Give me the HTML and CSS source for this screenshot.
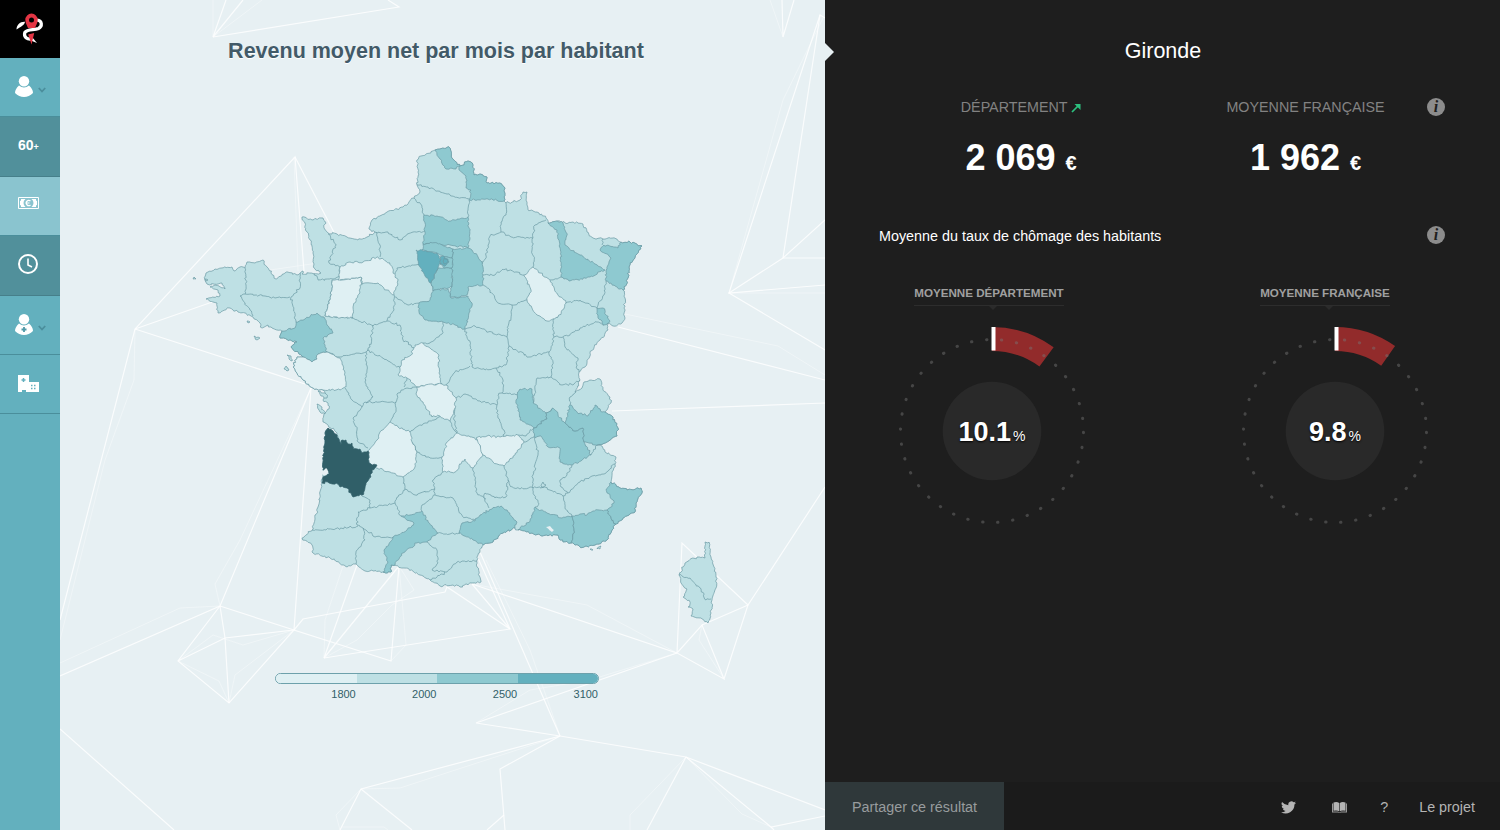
FILE: index.html
```html
<!DOCTYPE html>
<html lang="fr">
<head>
<meta charset="utf-8">
<title>Revenu moyen net par mois par habitant</title>
<link rel="stylesheet" href="styles.css">
</head>
<body>
<div class="app">
  <nav class="side">
    <a class="side-logo"><svg width="30" height="34" viewBox="0 0 30 34"><path d="M1.500 17.500C1.500 13 5 9.500 10 9.800C9.500 13.500 6 14.500 1.500 17.500Z" fill="#fff"/><path d="M22 8C27.500 8.500 27.500 14.500 23.500 16.500C19 18.500 12.500 16.500 9.800 20.500C8.500 25 12 28 17 27" fill="none" stroke="#fff" stroke-width="3.200"/><path d="M17 25l5 6-5-2z" fill="#fff"/><path d="M16.500 1.500a6.300 6.300 0 0 1 6.200 6.300C22.700 11 21 13.500 20 16h-7C12 13.500 10.300 11 10.300 7.800A6.300 6.300 0 0 1 16.500 1.500Z" fill="#e33544"/><circle cx="16.500" cy="8" r="2.500" fill="#000"/><path d="M13.200 22.500l6-1.500-2.700 11.500z" fill="#e33544"/></svg></a>
    <a class="side-item user"><svg width="18" height="21" viewBox="0 0 18 21"><circle cx="9" cy="5.200" r="5.200" fill="#fff"/><path d="M4 9.500Q9 13.500 14 9.500Q18 13 18 17Q14 21 9 21T0 17Q0 13 4 9.500Z" fill="#fff"/></svg><svg class="chev" width="8" height="6" viewBox="0 0 8 6"><path d="M.8 1L4 4.500 7.200 1" fill="none" stroke="#4b8e9c" stroke-width="1.800"/></svg></a>
    <a class="side-item dark age"><span>60</span><small>+</small></a>
    <a class="side-item active"><svg class="money" width="21" height="12" viewBox="0 0 21 12"><path d="M.5.5h20v11H.5z" fill="none" stroke="#fff"/><path d="M3 2h4.500a5 5 0 0 0 0 8H3V8.500A2 2 0 0 0 2 8V4a2 2 0 0 0 1-.5zM13.500 2H18v1.500a2 2 0 0 0 1 .5v4a2 2 0 0 0-1 .5V10h-4.500a5 5 0 0 0 0-8z" fill="#fff"/><path d="M12.500 4a2.600 2.600 0 1 0 0 4M8 6h3.500" fill="none" stroke="#fff" stroke-width="1.200"/></svg></a>
    <a class="side-item dark tall"><svg width="20" height="20" viewBox="0 0 20 20"><circle cx="10" cy="10" r="9" fill="none" stroke="#fff" stroke-width="2"/><path d="M10 4.500V11l4 2" fill="none" stroke="#fff" stroke-width="1.600"/></svg></a>
    <a class="side-item user"><svg width="18" height="21" viewBox="0 0 18 21"><circle cx="9" cy="5.200" r="5.200" fill="#fff"/><path d="M4 9.500Q9 13.500 14 9.500Q18 13 18 17Q14 21 9 21T0 17Q0 13 4 9.500Z" fill="#fff"/><path d="M9 13v5M6.500 15.500h5" stroke="#509aa8" stroke-width="1.800"/></svg><svg class="chev" width="8" height="6" viewBox="0 0 8 6"><path d="M.8 1L4 4.500 7.200 1" fill="none" stroke="#4b8e9c" stroke-width="1.800"/></svg></a>
    <a class="side-item"><svg width="21" height="18" viewBox="0 0 21 18"><path d="M0 0h11v7h10v10H8v-2H4v2H0z" fill="#fff"/><path d="M5.500 3v4M3.500 5h4" stroke="#63b0be" stroke-width="1.500"/><path d="M13 10.500h1.500M16 10.500h1.500M13 13.500h1.500M16 13.500h1.500" stroke="#63b0be" stroke-width="1.500"/></svg></a>
  </nav>

  <main class="stage">
    <svg class="map" id="map" viewBox="60 0 765 830" width="765" height="830">
      <g class="mesh" id="mesh"></g>
      <g class="mesh faint" id="mesh-faint"></g>
      <g id="land"></g>
    </svg>
    <h1 class="map-title">Revenu moyen net par mois par habitant</h1>
    <div class="legend">
      <div class="legend-bar"><i class="t1"></i><i class="t2"></i><i class="t3"></i><i class="t4"></i></div>
      <div class="legend-labels"><span>1800</span><span>2000</span><span>2500</span><span>3100</span></div>
    </div>
  </main>

  <aside class="panel">
    <i class="notch"></i>
    <h2 class="place">Gironde</h2>
    <section class="figures">
      <div class="figure"><div class="label">DÉPARTEMENT <svg width="10" height="10" viewBox="0 0 10 10"><path d="M1 9L7.500 2.500" fill="none" stroke="#2cc07f" stroke-width="1.700"/><path d="M3.500 1H9.500V7z" fill="#2cc07f"/></svg></div><div class="value">2 069 <small>€</small></div></div>
      <div class="figure"><div class="label">MOYENNE FRANÇAISE</div><div class="value">1 962 <small>€</small></div></div>
      <span class="info">i</span>
    </section>
    <section class="question"><p>Moyenne du taux de chômage des habitants</p><span class="info">i</span></section>
    <section class="gauges">
      <div class="gauge first">
        <h3>MOYENNE DÉPARTEMENT</h3>
        <div class="dial"><svg width="210" height="210" viewBox="-105 -105 210 210"><circle r="49.300" fill="#292929"/><path d="M0 -92A92 92 0 0 1 54.530 -74.100" fill="none" stroke="#922b2b" stroke-width="24"/><circle class="dots" r="91.500" transform="rotate(.8)"/><path d="M1.500 -104v23.500" stroke="#fff" stroke-width="4"/></svg><div class="rate">10.1<small>%</small></div></div>
      </div>
      <div class="gauge second">
        <h3>MOYENNE FRANÇAISE</h3>
        <div class="dial"><svg width="210" height="210" viewBox="-105 -105 210 210"><circle r="49.300" fill="#292929"/><path d="M0 -92A92 92 0 0 1 53.130 -75.110" fill="none" stroke="#922b2b" stroke-width="24"/><circle class="dots" r="91.500" transform="rotate(.8)"/><path d="M1.500 -104v23.500" stroke="#fff" stroke-width="4"/></svg><div class="rate">9.8<small>%</small></div></div>
      </div>
    </section>
    <footer class="foot">
      <a class="share">Partager ce résultat</a>
      <div class="links">
        <svg class="bird" width="15" height="13" viewBox="0 0 24 20"><path d="M24 2.400a10 10 0 0 1-2.800.8A5 5 0 0 0 23.300.5a10 10 0 0 1-3.100 1.200 4.900 4.900 0 0 0-8.400 4.500A14 14 0 0 1 1.700 1a4.900 4.900 0 0 0 1.500 6.600A5 5 0 0 1 1 7a4.900 4.900 0 0 0 3.900 4.900 5 5 0 0 1-2.200.1 4.900 4.900 0 0 0 4.600 3.400A10 10 0 0 1 0 17.400 14 14 0 0 0 21.500 5 10 10 0 0 0 24 2.400z" fill="#b4b4b4"/></svg>
        <svg class="book" width="15" height="11" viewBox="0 0 15 11"><path d="M0 1.500h1V9.500h5l1.500 1 1.500-1h5v-8h1V10.500H9l-1.500.5L6 10.500H0z" fill="#999"/><path d="M1.500.5Q5-.5 7.200 1V9.300Q5 8 1.500 8.800zM13.500.5Q10-.5 7.800 1V9.300Q10 8 13.500 8.800z" fill="#b4b4b4"/></svg>
        <a class="help">?</a><a>Le projet</a>
      </div>
    </footer>
  </aside>
</div>
<script src="map.js"></script>
</body>
</html>
```
FILE: styles.css
```css
* { box-sizing: border-box; }
body { margin: 0; font-family: "Liberation Sans", Arial, sans-serif; background: #1e1e1e; }
h1, h2, h3, p { margin: 0; }
.app { display: grid; grid-template-columns: 60px 765px 675px; height: 830px; overflow: hidden; }

/* Sidebar */
.side { background: #63b0be; display: flex; flex-direction: column; }
.side-logo { height: 58px; background: #000; display: flex; justify-content: center; align-items: center; }
.side-item { height: 59px; border-bottom: 1px solid #4a8e9b; display: flex; align-items: center; padding-left: 18px; color: #fff; }
.side-item.user { padding: 0 0 2px 15px; gap: 5px; }
.chev { margin-top: 7px; }
.side-item.dark { background: #51909b; border-color: #467f8a; height: 60px; }
.side-item.active { background: #8ac4cf; }
.side-item.active .money { margin-top: -7px; }
.side-item.tall { padding-bottom: 4px; }
.age { font-size: 14px; font-weight: bold; padding-bottom: 4px; }
.age small { font-size: 9px; margin-top: 5px; }

/* Map area */
.stage { position: relative; background: #e7f0f3; display: flex; flex-direction: column; align-items: center; }
.map { position: absolute; inset: 0; }
.map-title { position: relative; margin-top: 38px; padding-right: 13px; font-size: 21.500px; line-height: 26px; color: #425a68; text-shadow: 0 1px 0 #fff; }
.mesh path { fill: none; stroke: #fff; stroke-width: 1.2; opacity: .8; }
.mesh.faint path { stroke-width: .8; opacity: .45; }
.dep { stroke: #6a9aa4; stroke-width: .7; stroke-linejoin: round; }
.line { fill: none; }
.d1 { fill: #dff0f3; }
.d2 { fill: #bee0e4; }
.d3 { fill: #8ec9d0; }
.d4 { fill: #63b0be; }
.selected { fill: #305f68; stroke: #305f68; }
.water { fill: #e7f0f3; stroke: none; }
.legend { position: relative; margin: 609px 11px 0 0; width: 324px; }
.legend-bar { height: 11px; border: 1px solid #6da1ab; border-radius: 6px; overflow: hidden; display: flex; }
.legend-bar i { flex: 1; }
.t1 { background: #dff0f3; }
.t2 { background: #bee0e4; }
.t3 { background: #8ec9d0; }
.t4 { background: #63b0be; }
.legend-labels { display: grid; grid-template-columns: repeat(4, 1fr); margin: 4px 1px 0 0; font-size: 11px; line-height: 13px; color: #315f68; text-align: right; }

/* Results panel */
.panel { position: relative; background: #1e1e1e; color: #fff; display: flex; flex-direction: column; }
.notch { position: absolute; left: 0; top: 43px; border: 9px solid transparent; border-left-color: #e7f0f3; border-right: 0; }
.place { margin-top: 38px; padding-left: 1px; font-size: 21.500px; line-height: 26px; font-weight: normal; text-align: center; }
.figures { display: grid; grid-template-columns: 284px 285px 1fr; padding-left: 54px; height: 134px; margin-top: 34px; }
.figures .info { margin-left: -21px; }
.figure { display: flex; flex-direction: column; align-items: center; }
.label { font-size: 14.300px; line-height: 18px; color: #828282; white-space: nowrap; }
.label svg { vertical-align: -1px; }
.value { font-size: 36px; line-height: 42px; font-weight: bold; margin-top: 21px; white-space: nowrap; }
.value small { font-size: 20px; }
.info { width: 18px; height: 18px; border-radius: 50%; background: #8c8c8c; color: #1e1e1e; font: italic bold 16px/18px "Liberation Serif", serif; text-align: center; }
.question { display: flex; justify-content: space-between; padding: 0 55px 0 54px; height: 54px; margin-top: -6px; font-size: 14.350px; line-height: 20px; }
.gauges { display: flex; justify-content: space-between; padding: 6px 60px 0 62px; }
.gauge { width: 210px; display: flex; flex-direction: column; align-items: center; }
.gauge h3 { position: relative; font-size: 11.620px; line-height: 14px; color: #a0a0a0; padding-bottom: 5px; border-bottom: 1px solid #2d2d2d; }
.first h3 { margin-right: 6px; }
.second h3 { margin-right: 20px; }
.gauge h3::after { content: ""; position: absolute; left: 50%; top: 20px; margin-left: 0; border: 4px solid transparent; border-top-color: #2b2b2b; border-bottom: 0; }
.dial { display: grid; place-items: center; height: 210px; margin-top: 20px; }
.dial > * { grid-area: 1 / 1; }
.dots { fill: none; stroke: #777; stroke-opacity: .45; stroke-width: 3; stroke-linecap: round; stroke-dasharray: .4 14.729; }
.rate { font-size: 27px; font-weight: bold; text-shadow: 0 1px 2px #000; padding-top: 2px; }
.rate small { font-size: 14px; font-weight: normal; margin-left: 2px; }
.foot { margin-top: auto; height: 48px; display: flex; justify-content: space-between; background: #1b1b1b; font-size: 14.350px; color: #b4b4b4; }
.share { width: 179px; background: #2f383a; color: #989c9e; display: grid; place-items: center; padding-top: 2px; }
.links { display: flex; align-items: center; padding: 2px 25px 0 0; }
.book { margin-left: 36px; }
.help { margin: 0 31px 0 33px; }
```
FILE: map.js
```js
const NS = "http://www.w3.org/2000/svg";

function points(text) {
  return text.trim().split(/\s+/).map(p => p.split(",").map(Number));
}

// Repeatable noise, so that a frontier is equal whichever side draws it.
function noise(x, y, k) {
  const s = Math.sin(x * 12.9898 + y * 78.233 + k * 37.719) * 43758.5453;
  return (s - Math.floor(s)) * 2 - 1;
}

function roughen(pts, closed) {
  const out = [];
  const count = closed ? pts.length : pts.length - 1;
  for (let i = 0; i < count; i++) {
    const a = pts[i], b = pts[(i + 1) % pts.length];
    const len = Math.hypot(b[0] - a[0], b[1] - a[1]);
    const steps = Math.max(1, Math.round(len / 1.9));
    const flip = a[0] > b[0] || (a[0] === b[0] && a[1] > b[1]);
    const [p, q] = flip ? [b, a] : [a, b];
    const seg = [p];
    for (let j = 1; j < steps; j++) {
      const t = j / steps;
      seg.push([p[0] + (q[0] - p[0]) * t + noise(p[0], q[1], j) * 1.05,
                p[1] + (q[1] - p[1]) * t + noise(q[0], p[1], j + 50) * 1.05]);
    }
    seg.push(q);
    if (flip) seg.reverse();
    seg.pop();
    out.push(...seg);
  }
  if (!closed) out.push(pts[pts.length - 1]);
  return out;
}

function draw(parent, pts, cls, closed) {
  const el = document.createElementNS(NS, "path");
  el.setAttribute("d", "M" + pts.map(p => p[0].toFixed(1) + " " + p[1].toFixed(1)).join("L") + (closed ? "Z" : ""));
  if (cls) el.setAttribute("class", cls);
  parent.appendChild(el);
}

const mesh = `304,271 295,157 135,329 60,620
295,157 338,240
135,329 218,300
135,329 305,384
311,388 220,606 60,676
311,388 294,630 391,661 399,566 324,658 357,565
220,606 294,630
220,606 178,661 229,703 294,630 225,638 178,661
220,606 225,638 229,703
294,630 303,619 445,592 447,587 510,629 324,658
478,558 510,629 472,584
480,552 560,736
472,584 677,653 702,625 724,679 677,653 682,543 748,605 724,679
702,625 748,605 825,487
677,653 476,723 560,736 361,789 340,830
361,789 412,830
560,736 500,769 505,830
504,815 487,830
560,736 686,757 825,810
686,757 771,827 825,816
771,827 774,830
686,757 647,830
60,729 174,830
226,0 213,37 243,0
213,37 399,7 388,0
782,0 783,37 794,0
825,18 820,15 729,293 825,285
820,15 783,258 825,258
825,350 729,293 783,258 825,220
618,327 825,380
612,411 825,403`;

const faint = `625,314 778,346 825,375
213,37 213,0
213,37 262,0
135,329 134,380 105,460 60,640
294,157 298,271
220,606 180,608 60,663
178,661 213,635 243,645 294,630
229,703 219,681 178,661
229,703 235,675 294,630
324,658 325,620 345,560
391,661 406,645 399,566 414,590 392,605 357,640 324,658
472,584 587,605 677,653
677,653 590,680 530,690 476,723
486,560 530,650 560,736
702,625 699,640 724,679
361,789 400,788 560,736
340,830 336,815 361,789
686,757 630,815 630,830
686,757 742,814 771,827
342,827 384,827 388,830
783,37 770,0
823,18 783,100 729,293
729,293 825,293
270,270 325,262
220,606 215,584 240,540 311,388`;

const mainland = `435,150 449,147 452,158 460,166 468,161 473,165 474,175 480,174 487,177 487,183 500,183 505,188 504,201 506,203 520,200 523,192 527,192 527,203 528,210 537,212 546,218 548,223 557,221 565,223 573,222 583,224 587,232 593,238 603,239 613,238 621,242 630,242 642,246 635,257 629,267 628,278 623,290 625,298 624,308 625,318 622,323 613,326 607,324 608,330 600,340 590,353 587,363 579,372 580,380 575,392 582,388 584,382 600,379 603,390 610,397 611,403 605,412 613,417 618,428 617,436 607,442 597,445 602,446 605,452 616,457 615,464 612,472 611,482 620,488 627,490 641,488 642,493 636,503 635,512 623,518 616,524 612,530 607,540 595,545 580,547 571,543 560,540 558,535 542,536 532,533 518,530 515,528 503,533 493,542 483,545 478,555 477,567 481,582 472,583 460,587 453,585 440,586 430,580 420,575 407,568 391,565 391,572 383,572 373,571 365,571 356,564 347,567 330,558 313,553 312,545 302,538 312,530 315,519 318,507 320,495 322,483 323,470 325,433 328,428 337,435 341,445 337,433 328,425 323,422 325,413 329,409 328,403 323,400 325,394 323,390 313,388 303,380 293,367 297,357 303,357 291,347 297,342 280,338 282,331 272,328 268,325 262,328 260,323 253,317 245,313 238,312 230,308 218,313 217,303 206,299 220,296 218,290 210,287 215,285 225,289 222,283 207,284 205,280 206,273 215,269 232,267 234,271 240,267 245,268 247,262 255,263 263,260 267,267 276,279 288,272 297,275 303,271 302,274 321,273 314,268 313,253 310,240 307,232 302,217 312,220 323,218 326,223 324,228 328,233 337,234 347,237 358,240 367,237 375,232 369,229 372,220 387,212 403,207 414,198 420,192 417,185 418,172 417,160 421,156`;

const islands = `705,542 709,542 711,557 714,567 716,575 716,588 712,600 711,613 708,623 700,618 691,616 693,609 688,607 690,602 683,597 687,589 681,583 679,575 685,563 697,557 705,558
318,391 326,394 327,398 321,396
317,404 322,407 325,414 320,412
254,336 260,338 257,340 255,339
205,279 208,280 206,281
194,277 196,279 193,279
286,366 289,370 287,371 284,369
287,355 291,356 292,361 289,359
597,549 601,546 600,549
590,549 593,550 591,550
247,321 250,322 248,323`;

const departments = {
  d3: `435,150 449,147 452,158 460,166 456,169 446,169 440,159
460,166 468,161 473,165 474,175 480,174 487,177 487,183 500,183 505,188 504,201 488,199 469,200 471,190 466,188 466,176 459,170
424,215 437,216 450,221 468,217 470,238 468,248 450,245 423,244 425,232
423,244 437,243 453,249 452,258 444,257 433,252 422,250
438,268 444,268 452,268 452,287 433,291 431,283
453,249 468,248 472,250 482,262 483,275 483,285 468,287 467,295 450,298 452,287 452,258
444,257 452,258 452,268 444,268 440,264
434,290 448,289 451,298 468,296 472,303 469,313 465,329 455,325 443,322 425,320 419,312 419,303 430,300
548,223 557,221 563,223 567,235 565,245 580,255 605,270 590,277 569,281 561,277 561,252 557,230
621,242 630,242 642,246 635,257 629,267 628,278 623,290 606,281 606,270 611,258 607,254 600,250 604,245 618,248
597,308 603,308 610,321 604,325 598,318
317,313 324,317 327,325 333,333 323,338 327,352 318,354 317,359 312,362 303,357 291,347 297,342 280,338 282,331 295,328 296,322 305,319
422,511 428,522 438,533 427,542 417,543 403,553 395,565 391,565 391,572 383,572 388,562 384,550 393,537 407,530 414,523 401,516 410,515
462,523 475,521 480,515 492,509 501,506 508,512 517,522 515,528 503,533 493,542 483,545 473,540 465,536 459,533
535,507 547,513 562,518 572,516 574,530 571,543 560,540 558,535 542,536 532,533 518,530 530,521
572,516 580,514 587,515 593,511 607,510 611,518 616,524 612,530 607,540 595,545 580,547 571,543 574,530
611,482 620,488 627,490 641,488 642,493 636,503 635,512 623,518 616,524 611,518 607,510 614,503 606,490
520,389 532,389 533,403 546,413 547,419 534,428 528,424 520,420 516,400
553,408 565,423 575,431 583,428 584,442 591,455 572,465 560,462 560,448 548,447 541,436 534,437 534,428 547,419 546,413
570,405 577,412 588,416 595,405 602,412 605,412 613,417 618,428 617,436 607,442 597,445 584,442 583,428 575,431 565,423`,
  d4: `416,250 424,251 437,253 441,260 438,268 431,283 425,276 420,267
440,257 444,256 448,259 449,262 445,266 440,264
444,258 448,261 444,264`,
  d1: `533,267 540,273 550,280 558,295 566,303 558,317 547,321 537,315 527,300 531,290 524,275
327,352 340,358 345,373 346,387 340,390 323,390 313,388 303,380 293,367 297,357 303,357 312,362 317,359 318,354
332,280 347,279 362,278 360,292 353,307 353,318 340,318 325,316 330,300
340,267 350,262 363,262 377,257 390,263 393,272 398,280 394,295 387,290 378,283 362,284 362,278 347,279 338,280
423,343 430,348 439,355 439,373 442,384 417,387 407,378 398,375 402,360 411,355 415,345
417,387 430,384 442,384 446,385 456,398 455,408 450,421 440,416 432,417 423,402 416,394
390,422 398,427 410,432 412,442 417,452 415,467 403,477 390,472 377,468 369,463 368,451 377,440 380,432
457,433 470,437 480,440 483,455 473,468 465,459 455,472 443,472 442,457 447,442
476,438 487,436 500,437 518,435 524,442 515,455 504,466 493,462 483,455 480,445`,
  selected: `328,428 337,435 341,445 342,440 346,440 348,444 352,443 353,449 360,449 362,453 368,451 369,463 377,465 372,470 371,477 366,483 363,495 353,497 351,493 347,488 340,487 337,483 333,484 328,482 322,483 323,477 329,474 326,469 323,470 325,433`,
  water: `322,472 326,468 329,474 323,475
546,527 550,526 554,530 552,532`
};

const frontiers = `417,185 428,187 437,191 447,194 452,196 469,199
414,198 422,206 424,215
469,200 468,210 468,217
506,203 506,215 501,222 501,232 490,236 488,245 486,258 482,264
501,232 512,237 533,238 535,225 546,220
533,238 532,250 534,262 533,267
483,275 495,275 503,269 517,272 524,275
550,280 561,277
483,285 490,290 498,303 512,305 527,300
512,305 511,318 507,330 507,337 488,332 475,326 465,329
566,303 580,300 597,308
606,281 604,295 597,308
603,239 602,245
558,317 553,320 554,337 568,336 580,328 597,322 604,325
507,337 509,346 529,357 549,352 554,337
563,337 565,347 578,358 576,367 579,372
549,352 553,362 551,377 562,385 574,384 580,380
509,346 506,365 496,368 503,380 502,393 518,395
551,377 537,378 535,390 533,403
546,413 553,408
576,392 570,397 570,405
465,329 470,345 472,367 485,370 496,368
443,322 442,334 430,343 423,343
446,385 455,372 470,366
456,398 465,394 480,401 497,405 499,393 502,393
455,408 454,420 457,433
497,405 498,418 504,430 504,437
518,435 526,436 534,428
504,466 508,480 511,487 520,489 530,487 533,488 533,475 538,455 535,437
524,442 534,437
572,465 567,475 560,480 561,487 568,493 563,496 545,487 533,488
543,482 546,485 543,488 541,486 543,482
568,493 580,482 592,476 604,474 615,464
591,455 597,445
563,496 565,508 572,516
533,488 535,498 539,504 535,507
508,480 506,497 495,498 485,493 484,498 489,508
473,468 475,480 477,493 486,499
443,472 433,480 435,495 453,498 463,517 475,520
435,495 422,505 422,511
438,533 450,534 460,533
412,442 417,452 430,458 442,457
403,477 405,490 398,497 395,503 401,516
405,489 415,495 435,489
410,432 420,425 434,420 440,417
450,421 454,430 457,433
366,483 361,495 370,500 370,508 385,505 395,503
370,508 358,512 357,525 366,530 375,537 393,537
312,530 335,529 358,526
363,528 365,540 356,552 356,564
427,542 437,550 438,563 432,570 445,572
430,580 447,572 457,562 477,561
345,388 352,400 362,407 353,418 357,430 357,441 368,448
362,407 365,402 380,402 396,402 396,410 390,422
366,352 367,370 365,382 373,397 366,403
396,402 398,393 407,388 417,387
367,350 383,358 400,368
407,378 404,387
327,352 340,357 366,352 370,347 373,325
325,316 353,318 373,326 387,321 400,325 403,340 411,345 415,350
394,295 394,310 387,321
395,297 408,305 419,303
395,274 397,268 412,265 420,265
431,283 433,291
375,232 388,232 400,240 413,232 425,231
376,232 380,245 380,257
328,234 336,245 330,258 329,263 340,267 338,277 333,279 318,280 314,273
300,273 300,288 291,297 296,322
332,280 330,300 325,316
245,268 246,285 245,294 240,296 250,310 253,316
245,294 265,296 275,298 290,297
679,575 690,578 700,588 706,600 711,599`;

const rows = text => text.trim().split("\n").map(points);
const land = document.getElementById("land");
rows(mesh).forEach(p => draw(document.getElementById("mesh"), p));
rows(faint).forEach(p => draw(document.getElementById("mesh-faint"), p));
draw(land, roughen(points(mainland), true), "dep d2", true);
rows(islands).forEach(p => draw(land, roughen(p, true), "dep d2", true));
rows(frontiers).forEach(p => draw(land, roughen(p, false), "dep line", false));
for (const tone in departments) {
  rows(departments[tone]).forEach(p => draw(land, roughen(p, true), "dep " + tone, true));
}
```
